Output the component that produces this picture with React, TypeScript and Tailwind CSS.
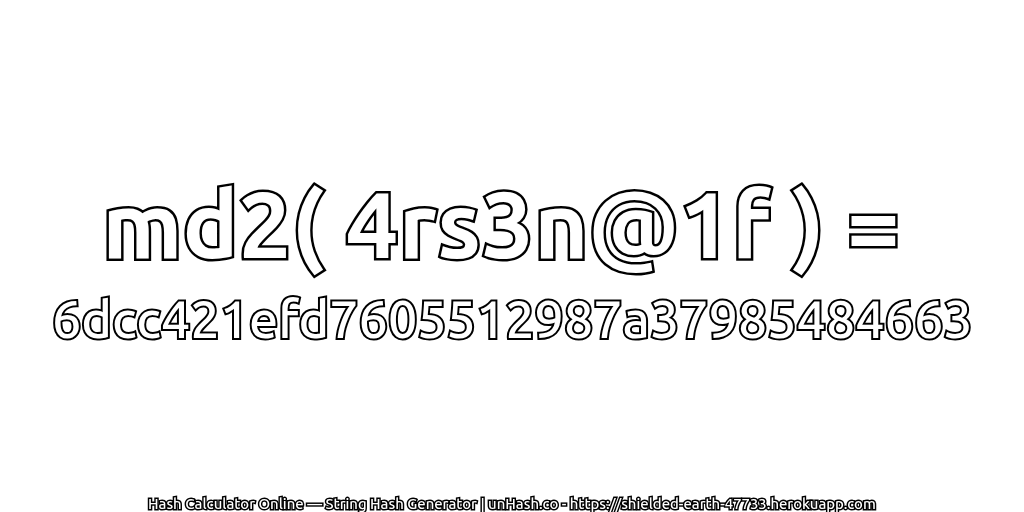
const font = { fontFamily: '"Ubuntu", "Noto Sans", "Open Sans", sans-serif' };

export default function App() {
  return (
    <div className="flex h-[512px] w-[1024px] flex-col items-center overflow-hidden bg-white" style={font}>
      <div className="mt-[168px] whitespace-pre text-[93.5px] leading-[112px] font-bold text-white [-webkit-text-stroke:5px_#000] [paint-order:stroke_fill] [will-change:transform]">
        {'md2( 4rs3n@1f ) = '}
      </div>
      <div className="mt-[7px] whitespace-nowrap text-[52px] leading-[64px] font-medium text-white [-webkit-text-stroke:4px_#000] [paint-order:stroke_fill] [will-change:transform]">
        6dcc421efd7605512987a37985484663
      </div>
      <div className="mt-auto mb-[-2px] whitespace-nowrap text-[14.9px] leading-[20px] font-medium text-white [-webkit-text-stroke:3px_#000] [paint-order:stroke_fill] [will-change:transform]">
        Hash Calculator Online — String Hash Generator | unHash.co - https://shielded-earth-47733.herokuapp.com
      </div>
    </div>
  );
}
